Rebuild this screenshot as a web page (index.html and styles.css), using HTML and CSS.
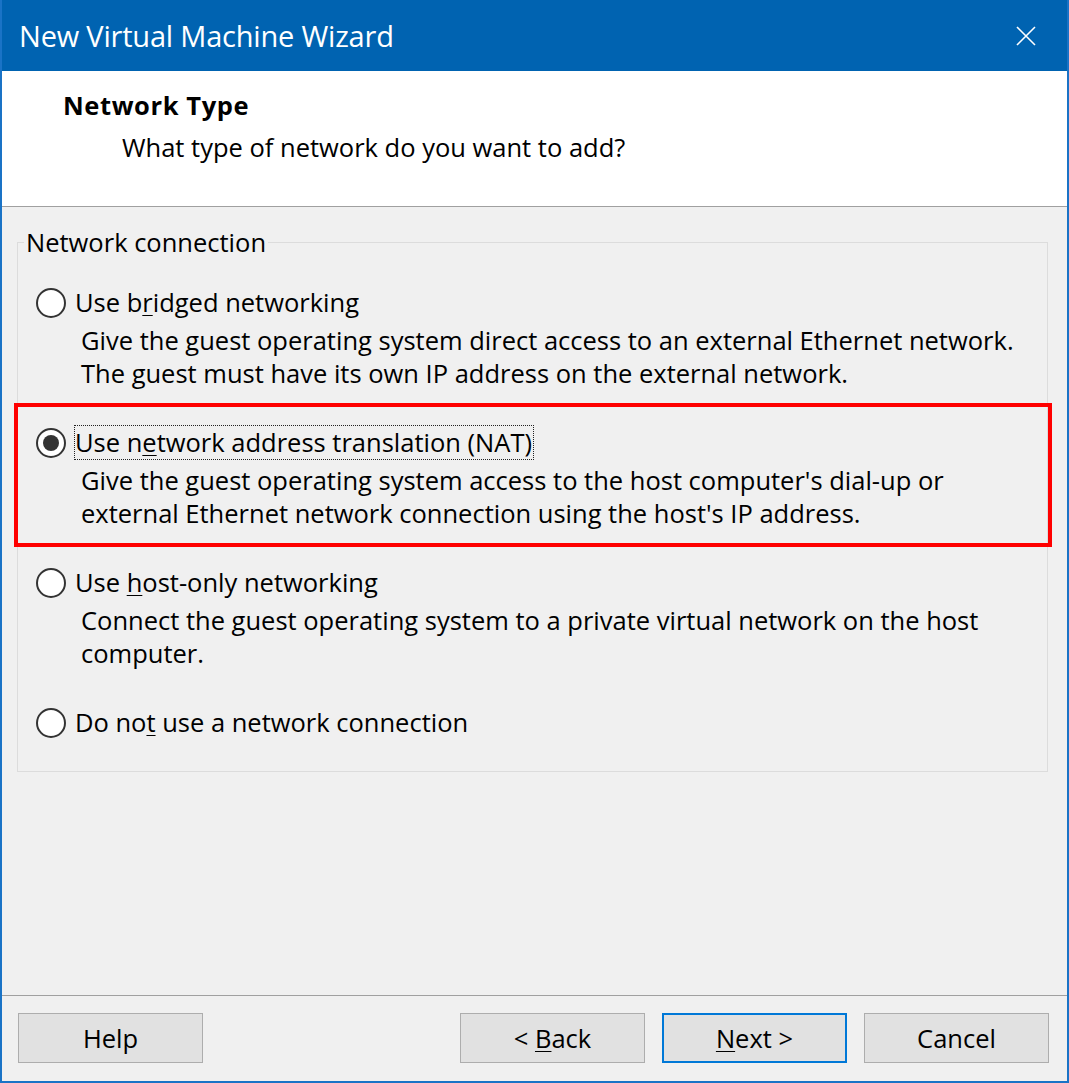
FILE: index.html
```html
<!doctype html>
<html lang="en">
  <head>
    <meta charset="UTF-8" />
    <meta name="viewport" content="width=device-width, initial-scale=1.0" />
    <title>New Virtual Machine Wizard</title>
    <link rel="stylesheet" href="styles.css">
  </head>
  <body>
    <div class="window">
      <div class="title-bar">
        <span class="title-text">New Virtual Machine Wizard</span>
        <button type="button" class="close-btn" aria-label="Close">
          <svg width="20" height="20" viewBox="0 0 20 20">
            <path d="M1 1 L19 19 M19 1 L1 19" stroke="#fff" stroke-width="1.6" fill="none" />
          </svg>
        </button>
      </div>

      <div class="header">
        <div class="header-title">Network Type</div>
        <div class="header-sub">What type of network do you want to add?</div>
      </div>

      <div class="content">
        <fieldset class="group">
          <legend>Network connection</legend>

          <div class="option">
            <label class="option-label">
              <span class="radio"></span>
              <span class="label-text">Use b<u>r</u>idged networking</span>
            </label>
            <div class="option-desc">
              Give the guest operating system direct access to an external Ethernet network.<br />
              The guest must have its own IP address on the external network.
            </div>
          </div>

          <div class="option highlighted">
            <label class="option-label">
              <span class="radio checked"></span>
              <span class="label-text focused">Use n<u>e</u>twork address translation (NAT)</span>
            </label>
            <div class="option-desc">
              Give the guest operating system access to the host computer's dial-up or<br />
              external Ethernet network connection using the host's IP address.
            </div>
          </div>

          <div class="option">
            <label class="option-label">
              <span class="radio"></span>
              <span class="label-text">Use <u>h</u>ost-only networking</span>
            </label>
            <div class="option-desc">
              Connect the guest operating system to a private virtual network on the host<br />
              computer.
            </div>
          </div>

          <div class="option">
            <label class="option-label">
              <span class="radio"></span>
              <span class="label-text">Do no<u>t</u> use a network connection</span>
            </label>
          </div>
        </fieldset>
      </div>

      <div class="footer">
        <button type="button" class="btn">Help</button>
        <div class="footer-right">
          <button type="button" class="btn">&lt; <u>B</u>ack</button>
          <button type="button" class="btn default"><u>N</u>ext &gt;</button>
          <button type="button" class="btn">Cancel</button>
        </div>
      </div>
    </div>
  </body>
</html>
```

FILE: styles.css
```css
* {
  box-sizing: border-box;
}
body {
  margin: 0;
  background: #f0f0f0;
  font-family: "Open Sans", "Noto Sans", sans-serif;
  font-size: 25.5px;
  color: #000;
}
u {
  text-decoration-thickness: 1px;
  text-underline-offset: 3px;
}
.window {
  width: 1069px;
  height: 1083px;
  border: 2px solid #1a73c6;
  border-top: none;
  display: flex;
  flex-direction: column;
  background: #f0f0f0;
}
.title-bar {
  height: 71px;
  margin: 0 -2px;
  padding: 0 22px 0 17px;
  background: #0063b1;
  color: #fff;
  display: flex;
  align-items: center;
  justify-content: space-between;
  border-left: 2px solid #1a73c6;
  border-right: 2px solid #1a73c6;
}
.title-text {
  font-size: 29px;
  letter-spacing: -0.2px;
}
.close-btn {
  background: none;
  border: none;
  padding: 0;
  width: 20px;
  height: 20px;
  margin-right: 9px;
  display: flex;
}
.header {
  background: #fff;
  height: 136px;
  border-bottom: 1px solid #a0a0a0;
  padding: 0 0 0 61px;
  line-height: 33px;
}
.header-title {
  font-weight: bold;
  margin-top: 18px;
  letter-spacing: 0.6px;
}
.header-sub {
  margin-top: 9px;
  padding-left: 59px;
}
.content {
  flex: 1;
  padding: 19px 19px 0 15px;
}
.group {
  margin: 0;
  border: 1px solid #dcdcdc;
  padding: 10px 0 31px 18px;
  line-height: 33px;
}
.group legend {
  padding: 0 2px;
  margin-left: -12px;
}
.option {
  position: relative;
  margin-top: 35px;
}
.group legend + .option {
  margin-top: 16px;
}
.option-label {
  display: flex;
  align-items: center;
}
.radio {
  width: 30px;
  height: 30px;
  border: 2px solid #333;
  border-radius: 50%;
  background: #fff;
  margin-right: 8px;
  display: flex;
  align-items: center;
  justify-content: center;
  flex-shrink: 0;
}
.radio.checked::after {
  content: "";
  width: 16px;
  height: 16px;
  border-radius: 50%;
  background: #333;
}
.label-text {
  padding: 0 1px 0 0;
  border: 1px dotted transparent;
}
.label-text.focused {
  border-color: #222;
}
.option-desc {
  margin-top: 4px;
  padding-left: 45px;
}
.highlighted::after {
  content: "";
  position: absolute;
  left: -22px;
  right: -5px;
  top: -22px;
  bottom: -17px;
  border: 4px solid #ff0000;
}
.footer {
  height: 86px;
  border-top: 1px solid #a0a0a0;
  padding: 17px 18px 0 16px;
  display: flex;
  justify-content: space-between;
  align-items: flex-start;
}
.footer-right {
  display: flex;
  gap: 17px;
}
.btn {
  width: 185px;
  height: 50px;
  background: #e1e1e1;
  border: 1px solid #adadad;
  font-family: inherit;
  font-size: 25.5px;
  color: #000;
  padding: 0;
}
.btn.default {
  border: 2px solid #0078d7;
}
```
